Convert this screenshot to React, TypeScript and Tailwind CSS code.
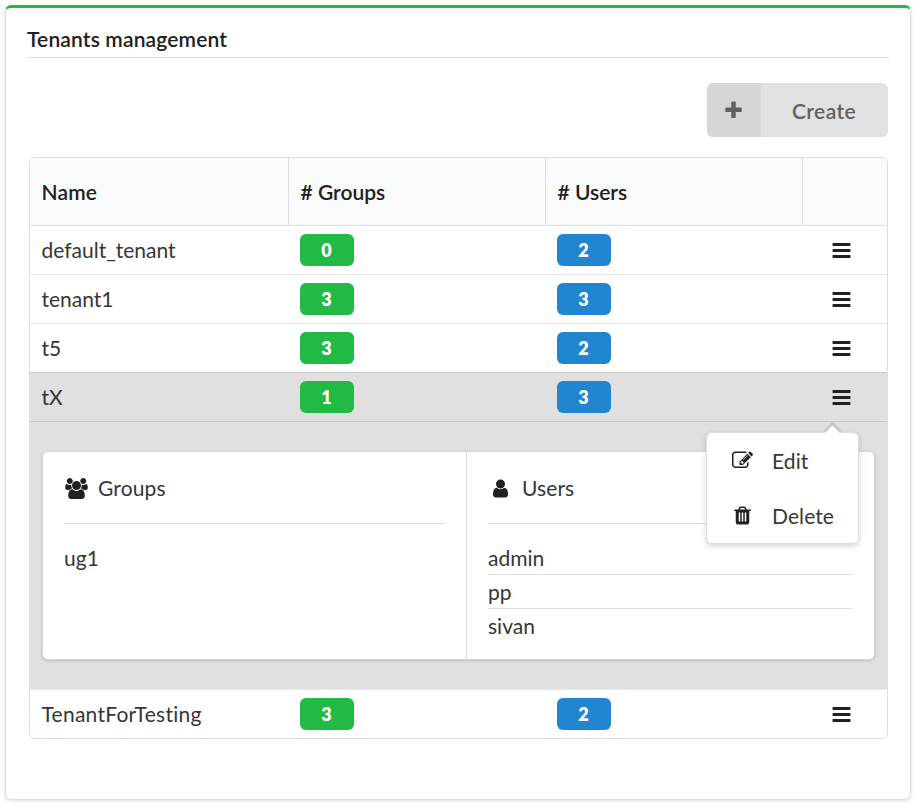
import type { ReactNode } from 'react';

const PATHS = {
  plus: 'M1600 736v192q0 40-28 68t-68 28h-416v416q0 40-28 68t-68 28h-192q-40 0-68-28t-28-68v-416h-416q-40 0-68-28t-28-68v-192q0-40 28-68t68-28h416v-416q0-40 28-68t68-28h192q40 0 68 28t28 68v416h416q40 0 68 28t28 68z',
  bars: 'M1664 1344v128q0 26-19 45t-45 19h-1408q-26 0-45-19t-19-45v-128q0-26 19-45t45-19h1408q26 0 45 19t19 45zm0-512v128q0 26-19 45t-45 19h-1408q-26 0-45-19t-19-45v-128q0-26 19-45t45-19h1408q26 0 45 19t19 45zm0-512v128q0 26-19 45t-45 19h-1408q-26 0-45-19t-19-45v-128q0-26 19-45t45-19h1408q26 0 45 19t19 45z',
  user: 'M1536 1399q0 109-62.5 187t-150.5 78h-854q-88 0-150.5-78t-62.5-187q0-85 8.5-160.5t31.5-152 58.5-131 94-89 134.5-34.5q131 128 313 128t313-128q76 0 134.5 34.5t94 89 58.5 131 31.5 152 8.5 160.5zm-256-887q0 159-112.5 271.5t-271.5 112.5-271.5-112.5-112.5-271.5 112.5-271.5 271.5-112.5 271.5 112.5 112.5 271.5z',
  users: 'M529 896q-162 5-265 128h-134q-82 0-138-40.5t-56-118.5q0-353 124-353 6 0 43.5 21t97.5 42.5 119 21.5q67 0 133-23-5 37-5 66 0 139 81 256zm1071 637q0 120-73 189.5t-194 69.5h-874q-121 0-194-69.5t-73-189.5q0-53 3.5-103.5t14-109 26.5-108.5 43-97.5 62-81 85.5-53.5 111.5-20q10 0 43 21.5t73 48 107 48 135 21.5 135-21.5 107-48 73-48 43-21.5q61 0 111.5 20t85.5 53.5 62 81 43 97.5 26.5 108.5 14 109 3.5 103.5zm-1024-1277q0 106-75 181t-181 75-181-75-75-181 75-181 181-75 181 75 75 181zm704 384q0 159-112.5 271.5t-271.5 112.5-271.5-112.5-112.5-271.5 112.5-271.5 271.5-112.5 271.5 112.5 112.5 271.5zm576 225q0 78-56 118.5t-138 40.5h-134q-103-123-265-128 81-117 81-256 0-29-5-66 66 23 133 23 59 0 119-21.5t97.5-42.5 43.5-21q124 0 124 353zm-128-609q0 106-75 181t-181 75-181-75-75-181 75-181 181-75 181 75 75 181z',
  edit: 'M888 1184l116-116-152-152-116 116v56h96v96h56zm440-720q-16-16-33 1l-350 350q-17 17-1 33t33-1l350-350q17-17 1-33zm80 594v190q0 119-84.5 203.5t-203.5 84.5h-832q-119 0-203.5-84.5t-84.5-203.5v-832q0-119 84.5-203.5t203.5-84.5h832q63 0 117 25 15 7 18 23 3 17-9 29l-49 49q-14 14-32 8-23-6-45-6h-832q-66 0-113 47t-47 113v832q0 66 47 113t113 47h832q66 0 113-47t47-113v-126q0-13 9-22l64-64q15-15 35-7t20 29zm-96-738l288 288-672 672h-288v-288zm444 132l-92 92-288-288 92-92q28-28 68-28t68 28l152 152q28 28 28 68t-28 68z',
  trash: 'M704 1376v-704q0-14-9-23t-23-9h-64q-14 0-23 9t-9 23v704q0 14 9 23t23 9h64q14 0 23-9t9-23zm256 0v-704q0-14-9-23t-23-9h-64q-14 0-23 9t-9 23v704q0 14 9 23t23 9h64q14 0 23-9t9-23zm256 0v-704q0-14-9-23t-23-9h-64q-14 0-23 9t-9 23v704q0 14 9 23t23 9h64q14 0 23-9t9-23zm-544-992h448l-48-117q-7-9-17-11h-317q-10 2-17 11zm928 32v64q0 14-9 23t-23 9h-96v948q0 83-47 143.5t-113 60.5h-832q-66 0-113-58.5t-47-141.5v-952h-96q-14 0-23-9t-9-23v-64q0-14 9-23t23-9h309l70-167q15-37 54-63t79-26h320q40 0 79 26t54 63l70 167h309q14 0 23 9t9 23z',
};

function Icon({ name, className = '' }: { name: keyof typeof PATHS; className?: string }) {
  return (
    <svg viewBox="0 0 1792 1792" className={`size-[21px] shrink-0 overflow-visible fill-current ${className}`}>
      <path d={PATHS[name]} />
    </svg>
  );
}

function Badge({ color, children }: { color: string; children: ReactNode }) {
  return (
    <span className={`flex h-8 w-[54px] items-center justify-center rounded-md pr-px text-lg leading-none font-extrabold text-white ${color}`}>
      {children}
    </span>
  );
}

type Tenant = { name: string; groups: number; users: number };

const COLS = 'grid grid-cols-[258px_257px_257px_85px]';

function Row({ tenant, className, children }: { tenant: Tenant; className: string; children?: ReactNode }) {
  return (
    <div className={`${COLS} items-center ${className}`}>
      <div className="pl-[11.5px] text-[#363636]">{tenant.name}</div>
      <div className="pl-3">
        <Badge color="bg-[#21ba45]">{tenant.groups}</Badge>
      </div>
      <div className="pl-3">
        <Badge color="bg-[#2185d0]">{tenant.users}</Badge>
      </div>
      <div className="relative pl-[29px]">
        <Icon name="bars" />
        {children}
      </div>
    </div>
  );
}

function ActionsMenu() {
  return (
    <div className="absolute top-[45px] -left-24 z-10 h-[112px] w-[153px] rounded-md border border-[#dededf] bg-white shadow-[0_2px_4px_rgba(34,36,38,0.12),0_2px_8px_rgba(34,36,38,0.08)]">
      <div className="absolute -top-[9px] left-[119px] size-[13px] rotate-45 border-t-[3px] border-l-[3px] border-[#c6c6c6] bg-white" />
      <div className="flex h-[55px] items-center pl-[25px]">
        <Icon name="edit" />
        <span className="pt-0.5 pl-[19px] tracking-[0.1px] text-[#363636]">Edit</span>
      </div>
      <div className="flex h-[55px] items-center pl-[25px]">
        <Icon name="trash" />
        <span className="pt-0.5 pl-[19px] tracking-[0.1px] text-[#363636]">Delete</span>
      </div>
    </div>
  );
}

const before: Tenant[] = [
  { name: 'default_tenant', groups: 0, users: 2 },
  { name: 'tenant1', groups: 3, users: 3 },
  { name: 't5', groups: 3, users: 2 },
];

export default function App() {
  return (
    <div className="h-[806px] w-[918px] bg-white p-[5px] font-['Lato',sans-serif] text-[21px] leading-[30px] text-[#212121] [font-variant-ligatures:none]">
      <div className="h-[795px] w-[906px] rounded-md border border-t-3 border-[#dededf] border-t-[#21ba45] px-[21px] pt-4 shadow-[0_1px_3px_rgba(34,36,38,0.15)]">
        <h1 className="h-[34px] border-b border-[#dededf] font-semibold tracking-[0.15px]">Tenants management</h1>

        <div className="mt-[25px] mr-px flex justify-end">
          <button className="flex h-[54px] w-[181px] overflow-hidden rounded-md bg-[#e0e1e2] font-semibold text-[#606060]">
            <span className="flex h-full w-[54px] items-center justify-center bg-[#d6d6d6]">
              <Icon name="plus" className="-ml-px" />
            </span>
            <span className="flex h-full flex-1 items-center justify-center pt-0.5 pr-px tracking-[0.4px]">Create</span>
          </button>
        </div>

        <div className="mt-5 ml-0.5 h-[582px] w-[859px] rounded-md border border-[#dededf]">
          <div className={`${COLS} h-[68px] rounded-t-[5px] border-b border-[#dededf] bg-[#f9fafb] font-semibold`}>
            <div className="flex items-center pl-[11.5px] tracking-[0.15px]">Name</div>
            <div className="flex items-center border-l border-[#dededf] pl-[11.5px]"># Groups</div>
            <div className="flex items-center border-l border-[#dededf] pl-[11.5px]"># Users</div>
            <div className="border-l border-[#dededf]" />
          </div>
          {before.map((t, i) => (
            <Row
              key={t.name}
              tenant={t}
              className={i === 2 ? 'h-[49px] border-b border-[#c8c8c8]' : 'h-[49px] border-b border-[#e8e8e9]'}
            />
          ))}
          <Row tenant={{ name: 'tX', groups: 1, users: 3 }} className="h-[49px] border-b border-[#c8c8c8] bg-[#e0e0e0]">
            <ActionsMenu />
          </Row>

          <div className="h-[267px] bg-[#e0e0e0] px-3 pt-[29px] text-[#363636]">
            <div className="grid h-[209px] grid-cols-[423px_1fr] rounded-md border border-[#d6d6d6] bg-white shadow-[0_1px_3px_rgba(34,36,38,0.18)]">
              <div className="px-[21px] pt-[21px]">
                <div className="flex h-[51px] border-b border-[#dededf]">
                  <Icon name="users" className="mt-[5px] ml-[2px] text-[#212121]" />
                  <span className="pl-[11px] tracking-[0.15px]">Groups</span>
                </div>
                <div className="mt-[19px]">ug1</div>
              </div>
              <div className="border-l border-[#dededf] px-[21px] pt-[21px]">
                <div className="flex h-[51px] border-b border-[#dededf]">
                  <Icon name="user" className="mt-[5px] ml-[1.5px] text-[#212121]" />
                  <span className="pl-[11.5px] tracking-[0.1px]">Users</span>
                </div>
                <div className="mt-[19px] h-8 border-b border-[#dededf]">admin</div>
                <div className="h-[34px] border-b border-[#dededf] pt-0.5">pp</div>
                <div className="pt-0.5">sivan</div>
              </div>
            </div>
          </div>
          <Row
            tenant={{ name: 'TenantForTesting', groups: 3, users: 2 }}
            className="h-[49px] border-t border-[#e8e8e9] tracking-[0.25px]"
          />
        </div>
      </div>
    </div>
  );
}
